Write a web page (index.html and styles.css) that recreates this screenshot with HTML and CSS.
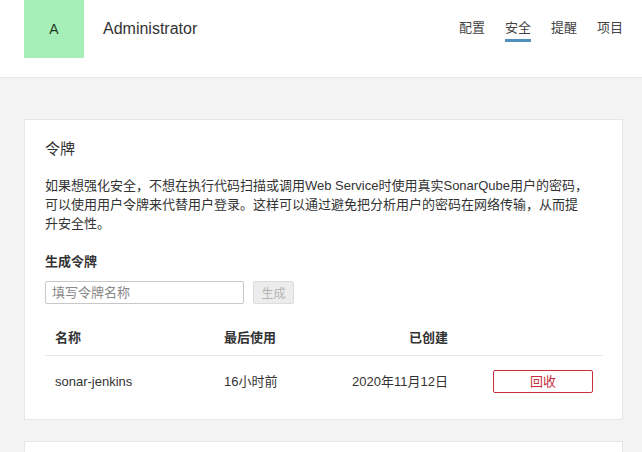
FILE: index.html
```html
<!DOCTYPE html>
<html lang="zh">
<head>
<meta charset="utf-8">
<link rel="stylesheet" href="styles.css">
</head>
<body>
<header class="top">
  <div class="user">
    <div class="avatar">A</div>
    <div class="uname">Administrator</div>
  </div>
  <nav class="tabs">
    <a class="tab">配置</a>
    <a class="tab active">安全</a>
    <a class="tab">提醒</a>
    <a class="tab">项目</a>
  </nav>
</header>
<main class="main">
  <section class="card">
    <h2 class="title">令牌</h2>
    <p class="desc">如果想强化安全，不想在执行代码扫描或调用Web Service时使用真实SonarQube用户的密码，可以使用用户令牌来代替用户登录。这样可以通过避免把分析用户的密码在网络传输，从而提升安全性。</p>
    <h3 class="sub">生成令牌</h3>
    <form class="gen">
      <input class="name-input" type="text" placeholder="填写令牌名称">
      <button class="gen-btn" type="button" disabled>生成</button>
    </form>
    <table class="tokens">
      <colgroup>
        <col class="w-name">
        <col class="w-last">
        <col class="w-created">
        <col class="w-act">
      </colgroup>
      <thead>
        <tr>
          <th>名称</th>
          <th>最后使用</th>
          <th class="right">已创建</th>
          <th></th>
        </tr>
      </thead>
      <tbody>
        <tr>
          <td>sonar-jenkins</td>
          <td>16小时前</td>
          <td class="right">2020年11月12日</td>
          <td class="right"><button class="revoke" type="button">回收</button></td>
        </tr>
      </tbody>
    </table>
  </section>
  <section class="card card-next"></section>
</main>
</body>
</html>
```
FILE: styles.css
```css
* { box-sizing: border-box; }
html, body { margin: 0; padding: 0; }
body {
  background: #f3f3f3;
  font-family: "Liberation Sans", "Noto Sans CJK SC", sans-serif;
  color: #333;
  font-size: 13px;
  overflow: hidden;
  height: 452px;
}
.top {
  height: 78px;
  background: #fff;
  border-bottom: 1px solid #e6e6e6;
  display: flex;
  justify-content: space-between;
  align-items: flex-start;
  padding: 0 19px 0 24px;
}
.user { display: flex; align-items: center; height: 58px; }
.avatar {
  width: 60px;
  height: 58px;
  background: #a6efb8;
  color: #1f3a24;
  display: flex;
  align-items: center;
  justify-content: center;
  font-size: 14px;
}
.uname {
  margin-left: 19px;
  font-size: 16px;
  color: #333;
  margin-top: -1px;
}
.tabs { display: flex; gap: 20px; padding-top: 18px; }
.tab {
  font-size: 13px;
  color: #444;
  line-height: 19px;
  padding-bottom: 2px;
  border-bottom: 3px solid transparent;
}
.tab.active { border-bottom-color: #4f8fbb; }
.main { padding: 41px 19px 0 24px; }
.card {
  background: #fff;
  border: 1px solid #e6e6e6;
  padding: 19px 19px 10px 20px;
  height: 301px;
}
.card-next { margin-top: 21px; height: 60px; }
.title {
  margin: 0;
  font-size: 15px;
  font-weight: normal;
  line-height: 20px;
  color: #333;
}
.desc {
  margin: 17px 0 0;
  line-height: 19px;
  width: 545px;
  color: #333;
}
.sub {
  margin: 19px 0 0;
  font-size: 13px;
  font-weight: bold;
  line-height: 20px;
}
.gen { display: flex; gap: 9px; margin-top: 9px; }
.name-input {
  width: 199px;
  height: 23px;
  border: 1px solid #c8c8c8;
  border-radius: 2px;
  padding: 0 6px;
  font: inherit;
  font-size: 13px;
  color: #333;
}
.name-input::placeholder { color: #888; }
.gen-btn {
  width: 41px;
  height: 23px;
  background: #ececec;
  border: 1px solid #dcdcdc;
  border-radius: 2px;
  color: #b4b4b4;
  font: inherit;
  font-size: 12px;
  padding: 0;
}
.tokens {
  margin-top: 17px;
  width: 558px;
  border-collapse: collapse;
  table-layout: fixed;
}
.w-name { width: 169px; }
.w-last { width: 110px; }
.w-created { width: 134px; }
.w-act { width: 145px; }
.tokens th {
  font-weight: bold;
  text-align: left;
  padding: 8px 10px;
  line-height: 18px;
  border-bottom: 1px solid #e6e6e6;
  white-space: nowrap;
}
.tokens td {
  padding: 0 10px;
  height: 52px;
  line-height: 18px;
  white-space: nowrap;
}
.tokens .right { text-align: right; }
.revoke {
  width: 100px;
  height: 23px;
  background: #fff;
  border: 1px solid #c8303c;
  border-radius: 2px;
  color: #c8303c;
  font: inherit;
  font-size: 13px;
  padding: 0;
  vertical-align: middle;
}
```
